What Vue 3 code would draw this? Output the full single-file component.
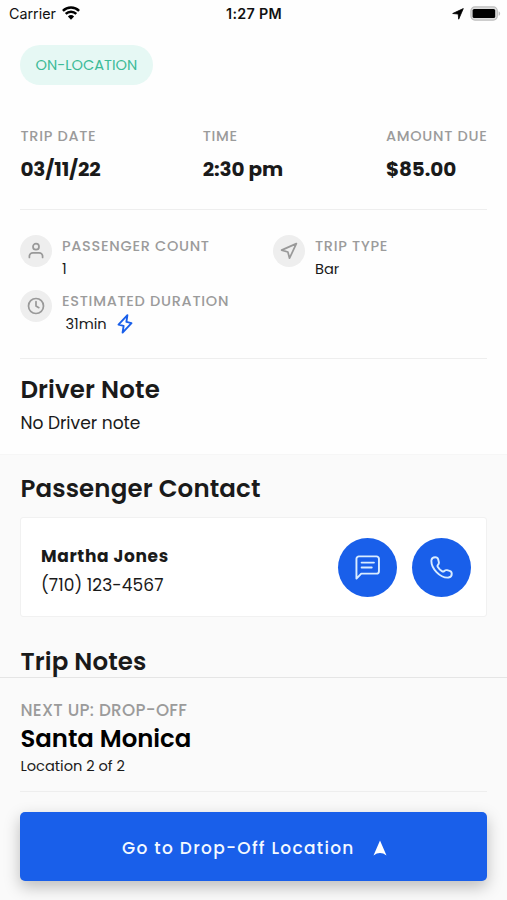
<script setup>
import { ref } from 'vue'

const trip = ref([
  { key: 'date', label: 'Trip Date', value: '03/11/22' },
  { key: 'time', label: 'Time', value: '2:30 pm' },
  { key: 'amount', label: 'Amount Due', value: '$85.00' },
])

const details = ref([
  { key: 'passengers', label: 'Passenger Count', value: '1' },
  { key: 'type', label: 'Trip Type', value: 'Bar' },
  { key: 'duration', label: 'Estimated Duration', value: '31min' },
])

const contact = ref({ name: 'Martha Jones', phone: '(710) 123-4567' })
</script>

<template>
  <div class="screen">
    <main class="content">
      <header class="status-bar">
        <div class="status-bar__side">
          <span class="carrier">Carrier</span>
          <svg class="wifi" viewBox="0 0 18 14" width="18" height="14">
            <g fill="none" stroke="#000" stroke-width="2.4">
              <path d="M.9 4.9a11.5 11.5 0 0 1 16.2 0" />
              <path d="M3.7 7.9a7.5 7.5 0 0 1 10.6 0" />
            </g>
            <path d="M9 13.8 5.9 10.5a4.5 4.5 0 0 1 6.2 0z" fill="#000" />
          </svg>
        </div>
        <span class="clock">1:27 PM</span>
        <div class="status-bar__side status-bar__side--end">
          <svg viewBox="0 0 12 12" width="12" height="12">
            <path d="M11.3.6 6.7 11.2 6.2 6 .7 5.5z" fill="#000" stroke="#000" stroke-width=".8" stroke-linejoin="round" />
          </svg>
          <svg viewBox="0 0 31 15" width="31" height="15">
            <rect x=".9" y=".9" width="26.4" height="13.2" rx="4" fill="#ddd" stroke="#bdbdbd" stroke-width="1.2" />
            <rect x="2.6" y="3" width="22.6" height="9" rx="1.6" fill="#000" />
            <path d="M28.6 5.2c2 .8 2 3.8 0 4.6z" fill="#bdbdbd" />
          </svg>
        </div>
      </header>

      <span class="badge">ON-LOCATION</span>

      <section class="summary">
        <div v-for="item in trip" :key="item.key" class="summary__item" :class="`summary__item--${item.key}`">
          <span class="label">{{ item.label }}</span>
          <strong class="summary__value">{{ item.value }}</strong>
        </div>
      </section>

      <section class="details">
        <div v-for="item in details" :key="item.key" class="detail" :class="`detail--${item.key}`">
          <span class="detail__icon">
            <svg viewBox="0 0 24 24" width="18" height="18">
              <template v-if="item.key === 'passengers'">
                <circle cx="12" cy="6.2" r="4" />
                <path d="M3.2 20.6v-1.5a4.6 4.6 0 0 1 4.6-4.6h8.4a4.6 4.6 0 0 1 4.6 4.6v1.5" />
              </template>
              <path v-else-if="item.key === 'type'" d="M21.8 2.2 2.2 10.8l8.3 2.5 2.2 8.3z" />
              <template v-else>
                <circle cx="12" cy="12" r="10" />
                <path d="M12 6.2V12l3.8 2.2" />
              </template>
            </svg>
          </span>
          <div class="detail__body">
            <span class="label">{{ item.label }}</span>
            <span class="detail__value">
              <span>{{ item.value }}</span>
              <svg v-if="item.key === 'duration'" class="bolt" viewBox="0 0 16 20" width="16" height="20">
                <path d="M10.4 1.2 1.5 10.6l5.1 1.2-1 6.8 8.9-9.4-5.1-1.3z" />
              </svg>
            </span>
          </div>
        </div>
      </section>

      <section class="driver-note">
        <h2>Driver Note</h2>
        <p>No Driver note</p>
      </section>

      <section class="more">
        <h2>Passenger Contact</h2>
        <div class="card">
          <div class="card__text">
            <strong>{{ contact.name }}</strong>
            <span class="card__phone">{{ contact.phone }}</span>
          </div>
          <button class="round" aria-label="Message">
            <svg viewBox="0 0 26 26" width="25" height="25">
              <path d="M1.5 24.5V4a2.6 2.6 0 0 1 2.6-2.6h18.2A2.6 2.6 0 0 1 24.9 4v12.8a2.6 2.6 0 0 1-2.6 2.6H6.5z" />
              <path d="M6.9 7.9h12.800M6.9 13h10.500" />
            </svg>
          </button>
          <button class="round" aria-label="Call">
            <svg viewBox="0 0 24 24" width="23" height="23">
              <path d="M1.5 4.3C1.8 2.4 3.4 1.3 5.4 1.3c1.8 0 2.7.7 3.1 2.2l.7 2.7c.3 1.2 0 2-.8 2.9-.8.8-.8 1.5-.2 2.5 1 1.7 2.4 3.1 4.2 4.2 1 .6 1.7.6 2.5-.2.9-.8 1.7-1.1 2.9-.8l2.7.7c1.5.4 2.2 1.300 2.200 3.100 0 2-1.300 3.700-3.300 3.900C10.500 23.300.700 12.500 1.500 4.300z" />
            </svg>
          </button>
        </div>
        <h2 class="more__notes">Trip Notes</h2>
      </section>
    </main>

    <footer class="next">
      <div class="next__info">
        <span class="next__label">NEXT UP: DROP-OFF</span>
        <strong class="next__place">Santa Monica</strong>
        <span class="next__count">Location 2 of 2</span>
      </div>
      <button class="go">
        <span>Go to Drop-Off Location</span>
        <svg viewBox="0 0 14 16" width="14" height="16">
          <path d="M7 .4 13.5 15.4Q7 10.8.5 15.4z" fill="#fff" />
        </svg>
      </button>
    </footer>
  </div>
</template>

<style>
body {
  margin: 0;
  background: #fff;
}
</style>

<style scoped>
.screen {
  display: flex;
  flex-direction: column;
  width: 507px;
  height: 900px;
  overflow: hidden;
  background: #fefefe;
  color: #1a1a1a;
  font-family: Poppins, Inter, 'Open Sans', sans-serif;
}

.content {
  flex: 1;
  min-height: 0;
  overflow: hidden;
}

h2,
p {
  margin: 0;
}

h2 {
  font-size: 24.5px;
  font-weight: 600;
  letter-spacing: 0.13px;
  line-height: 32px;
}

button {
  padding: 0;
  border: 0;
  font-family: inherit;
}

svg {
  display: block;
  flex: none;
}

span,
strong {
  white-space: nowrap;
}

.status-bar {
  display: grid;
  grid-template-columns: 1fr auto 1fr;
  align-items: center;
  height: 27px;
  padding: 0 6px 0 9px;
  color: #111;
  font-family: Inter, sans-serif;
  font-size: 14.3px;
}

.status-bar__side {
  display: flex;
  align-items: center;
  gap: 6px;
}

.status-bar__side--end {
  justify-content: flex-end;
}

.wifi {
  margin-top: -2px;
}

.clock {
  margin-right: 2px;
  font-weight: 600;
  letter-spacing: 0.3px;
}

.badge {
  display: flex;
  align-items: center;
  justify-content: center;
  box-sizing: border-box;
  width: 133px;
  height: 40px;
  margin: 18px 0 0 20.4px;
  padding-right: 1px;
  border-radius: 20px;
  background: #e6f8f4;
  color: #3dbb98;
  font-size: 14.6px;
}

.label {
  color: #9b9b9b;
  font-size: 14.5px;
  font-weight: 500;
  letter-spacing: 0.7px;
  line-height: 20px;
  text-transform: uppercase;
}

.summary {
  display: flex;
  justify-content: space-between;
  height: 83px;
  margin: 41px 20px 0 20.4px;
  border-bottom: 1px solid #eee;
}

.summary__item {
  display: flex;
  flex-direction: column;
  width: 101px;
}

.summary__item--time {
  margin-left: -1px;
}

.summary .label {
  letter-spacing: 0.7px;
}

.summary__value {
  margin-top: 8px;
  font-size: 20px;
  font-weight: 700;
  letter-spacing: -0.12px;
  line-height: 30px;
}

.details {
  display: grid;
  grid-template-columns: 253px 1fr;
  grid-auto-rows: 55px;
  height: 123px;
  margin: 0 20px 0 20.4px;
  padding-top: 25px;
  border-bottom: 1px solid #eee;
}

.detail {
  display: flex;
  gap: 9.6px;
}

.detail__icon {
  display: grid;
  place-items: center;
  width: 32px;
  height: 32px;
  border-radius: 50%;
  background: #eee;
}

.detail__icon svg {
  fill: none;
  stroke: #999;
  stroke-width: 2.3;
  stroke-linecap: round;
  stroke-linejoin: round;
}

.detail__body {
  display: flex;
  flex-direction: column;
  padding-top: 1px;
}

.detail__value {
  display: flex;
  align-items: center;
  gap: 10px;
  height: 20px;
  margin-top: 3px;
  font-size: 14.6px;
}

.detail--duration .detail__value {
  margin-left: 3.5px;
}

.bolt path {
  fill: none;
  stroke: #195fea;
  stroke-width: 1.9;
  stroke-linejoin: round;
}

.driver-note {
  height: 80px;
  padding: 15px 20.4px 0;
}

.driver-note p {
  margin-top: 5px;
  font-size: 17.1px;
  line-height: 24px;
}

.more {
  height: 260px;
  padding: 18px 20px 0 20.4px;
  border-top: 1px solid #f6f6f6;
  background: #fafafa;
}

.card {
  display: flex;
  align-items: center;
  gap: 15px;
  box-sizing: border-box;
  height: 100px;
  margin-top: 12px;
  padding: 0 14.6px 0 19.6px;
  border: 1px solid #f1f1f1;
  border-radius: 3px;
  background: #fff;
}

.card__text {
  display: flex;
  flex: 1;
  flex-direction: column;
  gap: 5px;
  padding-top: 6px;
  font-size: 17px;
  line-height: 24px;
}

.card__text strong {
  letter-spacing: 0.65px;
}

.card__phone {
  letter-spacing: 0.08px;
}

.round {
  display: grid;
  place-items: center;
  width: 59px;
  height: 59px;
  border-radius: 50%;
  background: #195fea;
}

.round svg {
  fill: none;
  stroke: #d9ecff;
  stroke-width: 2;
  stroke-linecap: round;
  stroke-linejoin: round;
}

.more__notes {
  margin-top: 29px;
}

.next {
  box-sizing: border-box;
  height: 223px;
  padding: 0 19.6px 0 20.4px;
  border-top: 1px solid #e5e5e5;
  background: #fafafa;
}

.next__info {
  display: flex;
  flex-direction: column;
  height: 113px;
  border-bottom: 1px solid #eee;
}

.next__label {
  margin-top: 22px;
  color: #9b9b9b;
  font-size: 16.8px;
  font-weight: 500;
  letter-spacing: 0.3px;
  line-height: 20px;
}

.next__place {
  margin-top: 4px;
  color: #000;
  font-size: 24.4px;
  font-weight: 600;
  line-height: 30px;
}

.next__count {
  margin-top: 2px;
  font-size: 14.6px;
  line-height: 20px;
}

.go {
  display: flex;
  align-items: center;
  justify-content: center;
  gap: 18px;
  width: 100%;
  height: 69px;
  margin-top: 20px;
  padding: 2px 0 0 1px;
  border-radius: 5px;
  background: #195fea;
  box-shadow: 0 6px 16px rgba(0, 0, 0, 0.25);
  color: #f4f9ff;
  font-size: 17px;
  font-weight: 500;
  letter-spacing: 1.3px;
}
</style>
